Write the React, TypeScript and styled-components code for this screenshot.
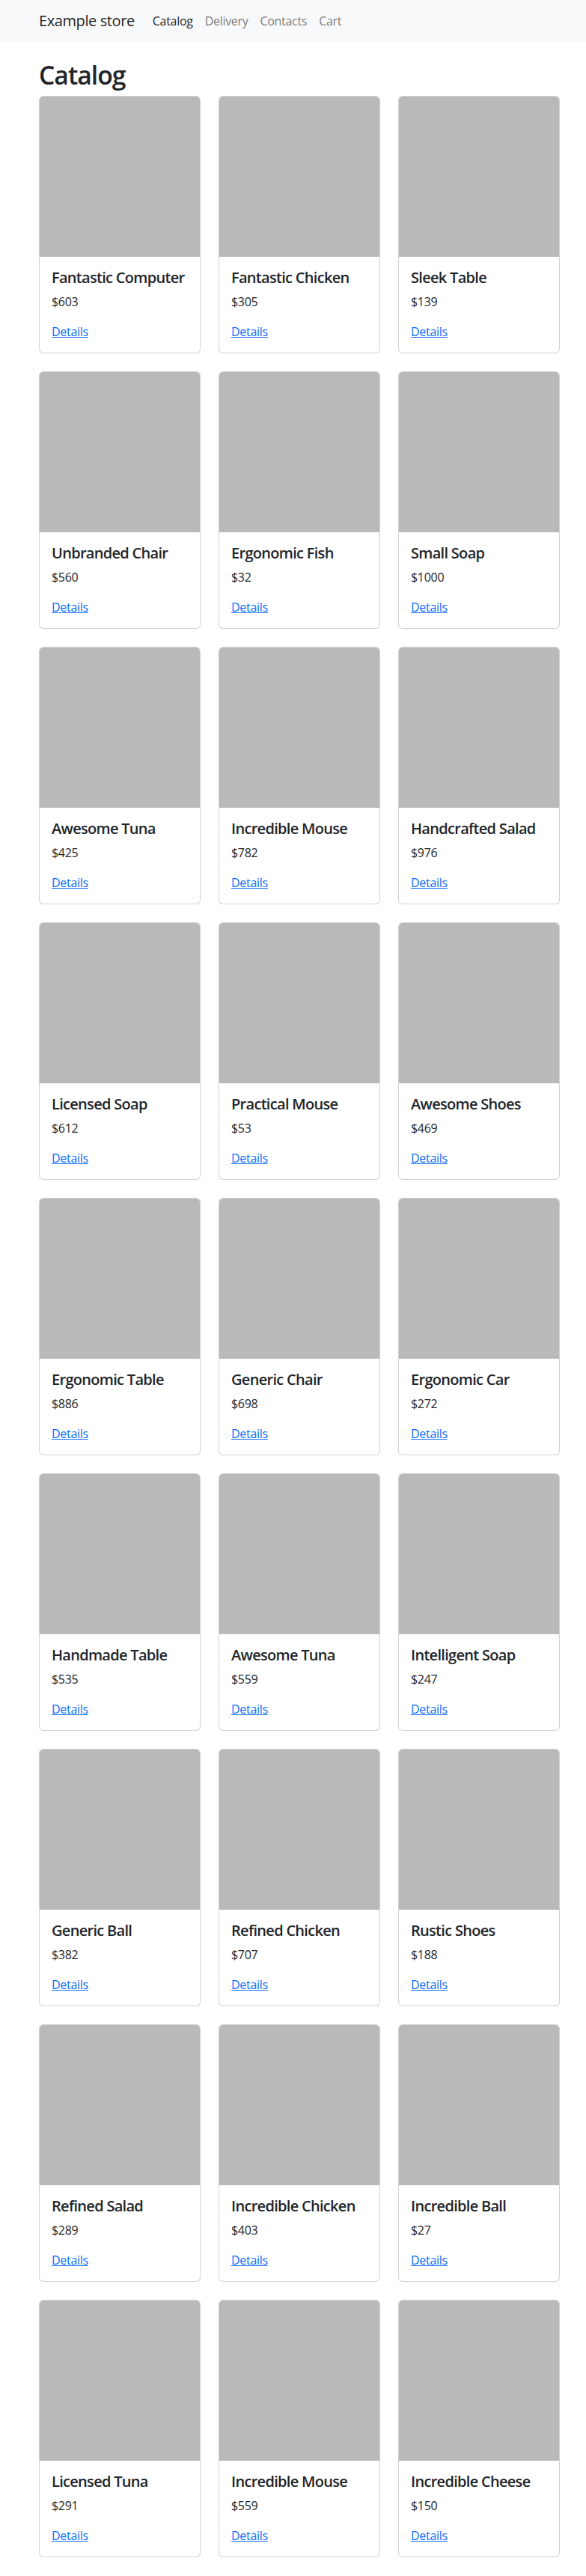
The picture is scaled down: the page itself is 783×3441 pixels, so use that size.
import React from "react";
import styled, { createGlobalStyle } from "styled-components";

const GlobalStyle = createGlobalStyle`
  * { box-sizing: border-box; }
  html, body { margin: 0; padding: 0; }
  body {
    font-family: "Open Sans", "Noto Sans", "Liberation Sans", sans-serif;
    font-size: 16px;
    line-height: 1.5;
    color: #212529;
    background: #fff;
  }
`;

const Navbar = styled.nav`
  height: 56px;
  background: #f8f9fa;
  display: flex;
  align-items: center;
  padding: 0 35px 0 52px;
`;

const Brand = styled.a`
  font-size: 20px;
  line-height: 30px;
  color: rgba(0, 0, 0, 0.9);
  text-decoration: none;
  margin-right: 16px;
  letter-spacing: -0.4px;
`;

const NavList = styled.div`
  display: flex;
`;

const NavLink = styled.a<{ $active?: boolean }>`
  padding: 8px;
  font-size: 16px;
  line-height: 24px;
  text-decoration: none;
  letter-spacing: -0.3px;
  color: ${(p) => (p.$active ? "rgba(0,0,0,0.9)" : "rgba(0,0,0,0.55)")};
`;

const Main = styled.main`
  padding: 24px 35px 0 52px;
`;

const Title = styled.h1`
  margin: 0 0 8px;
  font-size: 33.7px;
  line-height: 1.2;
  font-weight: 600;
  letter-spacing: -1px;
`;

const Grid = styled.div`
  display: grid;
  grid-template-columns: repeat(3, 216px);
  column-gap: 24px;
  row-gap: 24px;
  padding-bottom: 24px;
`;

const Card = styled.div`
  border: 1px solid rgba(0, 0, 0, 0.175);
  border-radius: 6px;
  overflow: hidden;
  display: flex;
  flex-direction: column;
  background: #fff;
`;

const CardImage = styled.div`
  width: 214px;
  height: 214px;
  background: #b9b9b9;
`;

const CardBody = styled.div`
  padding: 16px;
`;

const CardTitle = styled.h5`
  margin: 0 0 8px;
  font-size: 20px;
  line-height: 1.2;
  font-weight: 600;
  letter-spacing: -0.7px;
  white-space: nowrap;
`;

const Price = styled.p`
  margin: 0 0 16px;
  font-size: 16px;
  line-height: 24px;
  letter-spacing: -0.3px;
`;

const DetailsLink = styled.a`
  display: inline-block;
  font-size: 16px;
  line-height: 24px;
  color: #0d6efd;
  text-decoration: underline;
  letter-spacing: -0.3px;
`;

const products: [string, number][] = [
  ["Fantastic Computer", 603],
  ["Fantastic Chicken", 305],
  ["Sleek Table", 139],
  ["Unbranded Chair", 560],
  ["Ergonomic Fish", 32],
  ["Small Soap", 1000],
  ["Awesome Tuna", 425],
  ["Incredible Mouse", 782],
  ["Handcrafted Salad", 976],
  ["Licensed Soap", 612],
  ["Practical Mouse", 53],
  ["Awesome Shoes", 469],
  ["Ergonomic Table", 886],
  ["Generic Chair", 698],
  ["Ergonomic Car", 272],
  ["Handmade Table", 535],
  ["Awesome Tuna", 559],
  ["Intelligent Soap", 247],
  ["Generic Ball", 382],
  ["Refined Chicken", 707],
  ["Rustic Shoes", 188],
  ["Refined Salad", 289],
  ["Incredible Chicken", 403],
  ["Incredible Ball", 27],
  ["Licensed Tuna", 291],
  ["Incredible Mouse", 559],
  ["Incredible Cheese", 150],
];

export default function App() {
  return (
    <>
      <GlobalStyle />
      <Navbar>
        <Brand href="#">Example store</Brand>
        <NavList>
          <NavLink href="#" $active>Catalog</NavLink>
          <NavLink href="#">Delivery</NavLink>
          <NavLink href="#">Contacts</NavLink>
          <NavLink href="#">Cart</NavLink>
        </NavList>
      </Navbar>
      <Main>
        <Title>Catalog</Title>
        <Grid>
          {products.map(([name, price], i) => (
            <Card key={i}>
              <CardImage />
              <CardBody>
                <CardTitle>{name}</CardTitle>
                <Price>${price}</Price>
                <DetailsLink href="#">Details</DetailsLink>
              </CardBody>
            </Card>
          ))}
        </Grid>
      </Main>
    </>
  );
}
